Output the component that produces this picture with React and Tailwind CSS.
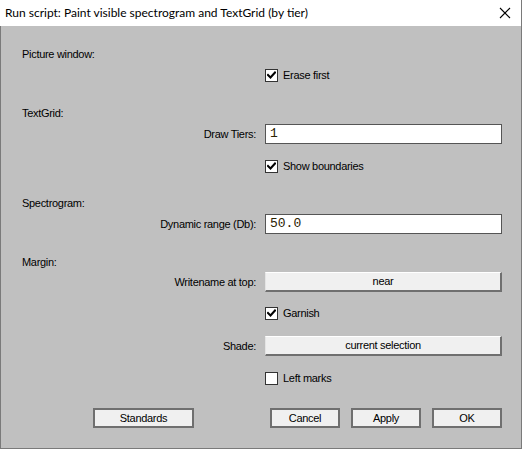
import React from "react";

const Check = ({ checked }) => (
  <div className="w-[13px] h-[13px] bg-white border border-[#333] flex items-center justify-center shrink-0">
    {checked && (
      <svg width="9" height="9" viewBox="0 0 9 9">
        <path d="M1 4 L3.5 6.5 L8 1.5" stroke="#000" strokeWidth="2" fill="none" strokeLinecap="square" />
      </svg>
    )}
  </div>
);

const Label = ({ children }) => (
  <div className="w-[264px] text-right pr-[9px] shrink-0">{children}</div>
);

const Row = ({ className = "", children }) => (
  <div className={"flex items-center h-[20px] " + className}>{children}</div>
);

const CheckRow = ({ checked, text, className }) => (
  <Row className={className}>
    <div className="w-[264px] shrink-0" />
    <Check checked={checked} />
    <span className="ml-[5px]">{text}</span>
  </Row>
);

const Section = ({ text, className }) => (
  <Row className={className}>
    <span className="ml-[21px]">{text}</span>
  </Row>
);

const Field = ({ label, value, className }) => (
  <Row className={className}>
    <Label>{label}</Label>
    <div className="w-[237px] h-[20px] bg-white border border-[#555] flex items-center px-[4px] text-[13px] tracking-normal text-[#2a2000]" style={{ fontFamily: '"Liberation Mono", monospace' }}>
      {value}
    </div>
  </Row>
);

const Opt = ({ label, value, className }) => (
  <Row className={className}>
    <Label>{label}</Label>
    <div className="w-[237px] h-[20px] bg-[#f0f0f0] border-t border-l border-t-white border-l-[#e4e4e4] border-r-2 border-b-2 border-r-[#6f6f6f] border-b-[#6f6f6f] flex items-center justify-center">
      {value}
    </div>
  </Row>
);

const Btn = ({ children, w }) => (
  <div className={"h-[20px] bg-[#f0f0f0] border-2 border-[#6f6f6f] flex items-center justify-center " + w}>
    {children}
  </div>
);

export default function App() {
  return (
    <div className="w-[522px] h-[449px] bg-[#c0c0c0] border-r border-b border-[#7a7a7a] text-[11px] tracking-[-0.3px] text-black flex flex-col" style={{ fontFamily: '"Liberation Sans", Arial, sans-serif' }}>
      <div className="h-[26px] bg-white flex items-center justify-between shrink-0 tracking-normal" style={{ fontFamily: 'Lato, sans-serif' }}>
        <span className="ml-[5px] text-[12px]">Run script: Paint visible spectrogram and TextGrid (by tier)</span>
        <svg width="12" height="12" viewBox="0 0 12 12" className="mr-[10px]">
          <path d="M1 1 L11 11 M11 1 L1 11" stroke="#000" strokeWidth="1.1" />
        </svg>
      </div>
      <div className="flex flex-col border-l border-[#7a7a7a] flex-1 pt-[18px]">
        <Section text="Picture window:" />
        <CheckRow checked text="Erase first" className="mt-[1px]" />
        <Section text="TextGrid:" className="mt-[18px]" />
        <Field label="Draw Tiers:" value="1" className="mt-[1px]" />
        <CheckRow checked text="Show boundaries" className="mt-[12px]" />
        <Section text="Spectrogram:" className="mt-[17px]" />
        <Field label="Dynamic range (Db):" value="50.0" className="mt-[1px]" />
        <Section text="Margin:" className="mt-[18px]" />
        <Opt label="Writename at top:" value="near" />
        <CheckRow checked text="Garnish" className="mt-[11px]" />
        <Opt label="Shade:" value="current selection" className="mt-[13px]" />
        <CheckRow text="Left marks" className="mt-[12px]" />
        <div className="flex items-center h-[20px] mt-[20px]">
          <div className="w-[92px] shrink-0" />
          <Btn w="w-[101px]">Standards</Btn>
          <div className="w-[76px] shrink-0" />
          <Btn w="w-[70px]">Cancel</Btn>
          <div className="w-[11px] shrink-0" />
          <Btn w="w-[70px]">Apply</Btn>
          <div className="w-[11px] shrink-0" />
          <Btn w="w-[70px]">OK</Btn>
        </div>
      </div>
    </div>
  );
}
